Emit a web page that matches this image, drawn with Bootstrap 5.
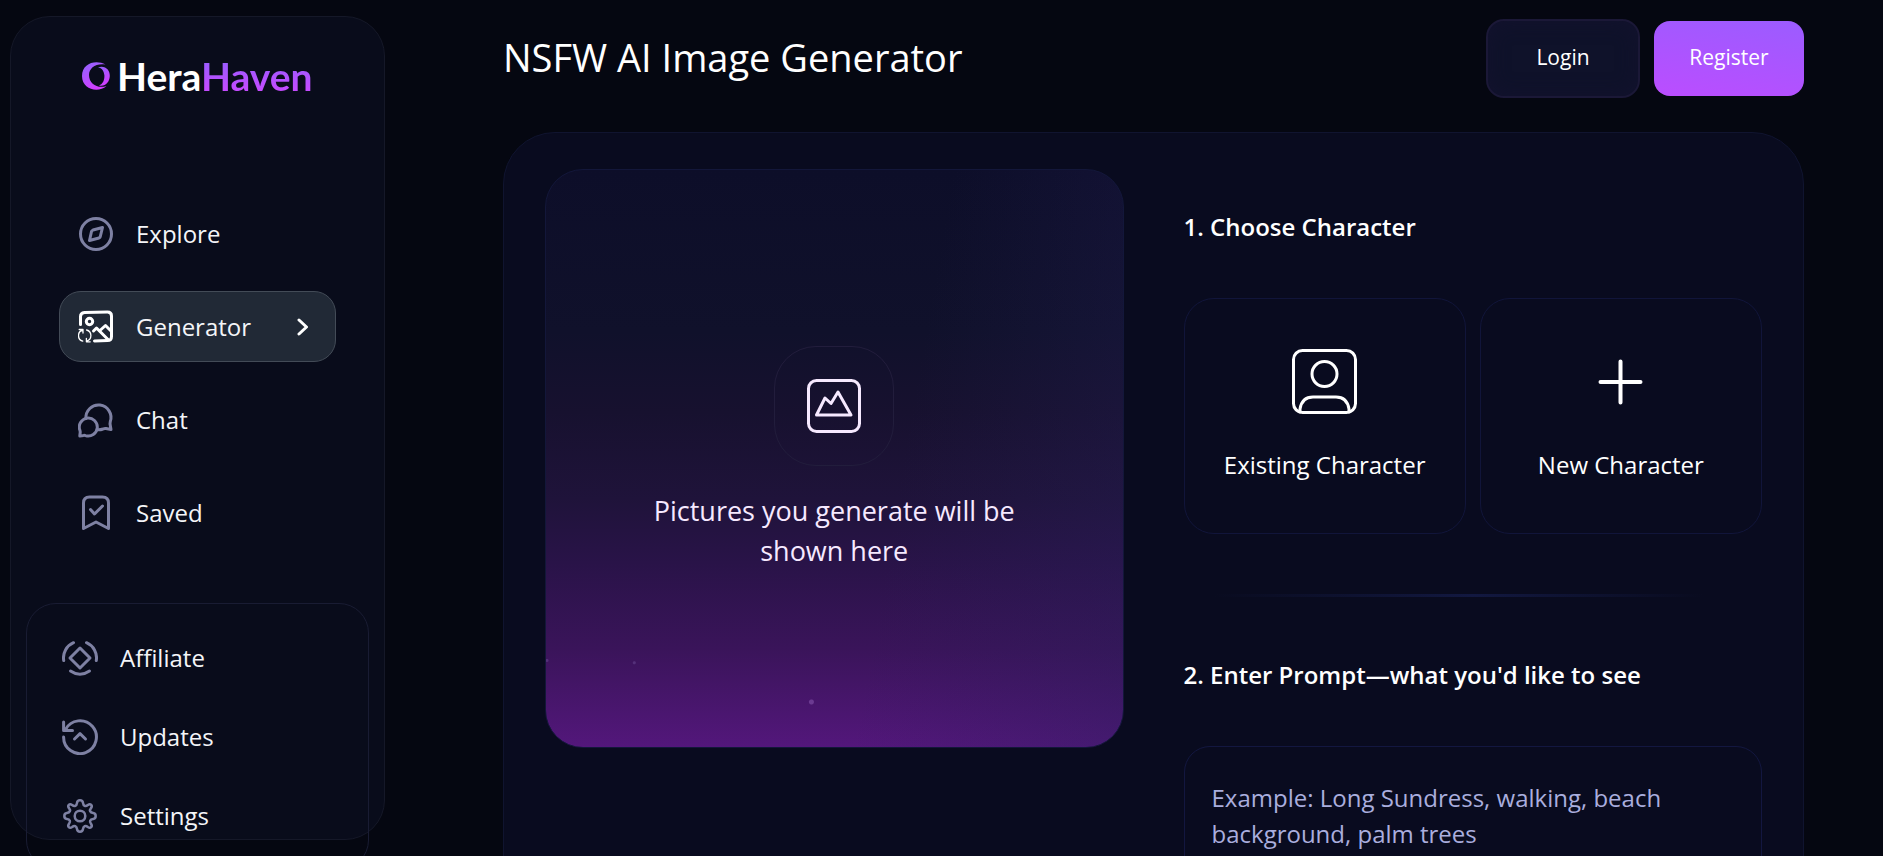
<!DOCTYPE html>
<html lang="en">
<head>
<meta charset="utf-8">
<meta name="viewport" content="width=device-width, initial-scale=1">
<title>HeraHaven – Image Generator</title>
<link href="https://cdn.jsdelivr.net/npm/bootstrap@5.3.0/dist/css/bootstrap.min.css" rel="stylesheet">
<style>
  html { scrollbar-width: none; }
  body { background: #050711; color: #fff; font-family: "Open Sans", sans-serif; font-size: 24px; line-height: 36px; }
  svg { display: block; flex: none; }
  .line-icon { fill: none; stroke: currentColor; stroke-width: 3; stroke-linecap: round; stroke-linejoin: round; }
  .plus-icon { stroke-width: 4; }
  .gear-icon { stroke-width: 1.2; }

  .side-panel { top: 16px; width: 375px; height: calc(100vh - 32px); margin: 16px 0 16px 10px; padding: 0 15px; flex: none;
    background: #090c1b; border: 1px solid #151828; border-radius: 40px; }
  .brand { padding: 37px 0 0 56px; gap: 7px; font: 700 39px/44px Lato, sans-serif; color: #fff; text-decoration: none; }
  .brand-accent { background: linear-gradient(#9b5cff 20%, #c44bff 80%); -webkit-background-clip: text; background-clip: text; color: transparent; }
  .main-menu { margin-top: 100px; padding: 0 33px; gap: 22px; }
  .menu-link { height: 71px; padding: 0 26px 0 18px; gap: 22px; color: #f4f5f8; text-decoration: none; border: 1px solid transparent; border-radius: 22px; }
  .menu-link svg:first-child { color: #7e81a3; }
  .menu-link.active { background: #212936; border-color: #434b57; }
  .menu-link.active svg { color: #fff; }
  .sub-menu { margin-top: 55px; padding: 14px 0; border: 1px solid #191c33; border-radius: 30px; }
  .sub-menu .menu-link { height: 79px; padding-left: 34px; }

  .content-area { margin: 0 79px 32px 118px; }
  .page-head { padding-top: 19px; padding-bottom: 34px; }
  .page-title { font-size: 38px; line-height: 52px; font-weight: 400; padding-bottom: 3px; }
  .head-actions { gap: 14px; }
  .btn-auth { width: 150px; height: 75px; padding: 0 0 2px; font-size: 21px; border: 0; border-radius: 16px; color: #fff; }
  .btn-login { width: 154px; height: 79px; background: #0f122a; border: 2px solid #1b1837; box-shadow: inset 0 0 20px #13122e; border-radius: 18px; }
  .btn-register, .btn-register:hover { color: #fff; background: linear-gradient(190deg, #9b5cff, #bb4dff); }
  .btn-login:hover { color: #fff; background: #171a36; border-color: #1b1837; }

  .workspace { padding: 36px 41px; background: #090b1f; border: 1px solid #10142f; border-radius: 52px; }
  .workspace-grid { display: grid; grid-template-columns: 1fr 1fr; gap: 60px; align-items: start; }
  .preview { aspect-ratio: 1; padding: 0 90px; border: 1px solid #13173a; border-radius: 38px; color: #f6e9ff; font-size: 27px; line-height: 40px;
    background:
      radial-gradient(circle at 46% 92.2%, #6b3a91 2px, transparent 3px),
      radial-gradient(circle at 15.3% 85.4%, #54307a 1px, transparent 2px),
      radial-gradient(circle at 1px 85%, #54307a 1px, transparent 2px),
      linear-gradient(100deg, transparent 60%, #26205a55 100%),
      linear-gradient(#0d0e29 0%, #10112b 28%, #17112f 42%, #1f133a 57%, #291348 68%, #3a145a 83%, #53177b 100%); }
  .preview-icon { width: 120px; height: 120px; margin-bottom: 25px; border: 1px solid #221d3c; border-radius: 42px; }

  .step-title { font-size: 24px; line-height: 36px; font-weight: 600; margin-bottom: 53px; }
  .step-first { padding-top: 40px; }
  .choice-grid { display: grid; grid-template-columns: 1fr 1fr; gap: 14px; }
  .btn-choice, .btn-choice:hover { height: 236px; padding: 0; gap: 33px; font-size: 24px; line-height: 36px; color: #fff; border: 1px solid #11153a; border-radius: 30px; }
  .step-divider { height: 3px; margin: 60px 0; border: 0; opacity: 1; background: linear-gradient(90deg, transparent 5%, #121840 50%, transparent 90%); }
  .prompt-box, .prompt-box:focus { height: 180px; padding: 33px 27px; font-size: 24px; line-height: 36px; color: #fff; resize: none;
    background: transparent; border: 1px solid #131740; border-radius: 26px; box-shadow: none; }
  .prompt-box::placeholder { color: #aaaede; opacity: 1; }
</style>
</head>
<body>
<div class="d-flex align-items-start">
  <aside class="side-panel sticky-top">
    <a class="brand d-flex align-items-center" href="#">
      <svg width="28" height="28" viewBox="0 0 28 28" aria-hidden="true">
        <defs><linearGradient id="ring" x1="0" y1="0" x2=".5" y2="1"><stop offset="0" stop-color="#8f66ff"/><stop offset="1" stop-color="#d23dff"/></linearGradient></defs>
        <g fill="url(#ring)">
          <path d="M23.500 2.600C14-2.600 0 1 0 14C0 27.500 16 31.500 24.500 24C16 27 7 22 7 13C7 6 14 1 23.500 2.600Z"/>
          <path d="M16 5.200C23.500 3 28 8 27.800 14C27.500 20 23.500 25 17 23.500C21 22 22.500 18 22.400 13.500C22 9 20 6 16 5.200Z"/>
        </g>
      </svg>
      <span>Hera<span class="brand-accent">Haven</span></span>
    </a>
    <nav class="main-menu d-flex flex-column" aria-label="Main">
      <a class="menu-link d-flex align-items-center" href="#">
        <svg class="line-icon" width="36" height="36" viewBox="0 0 36 36"><circle cx="18" cy="18" r="15.500"/><path d="M11.500 24.500L13.500 15.500Q14 14.500 15 14L24.500 11.500L22.300 20.500Q22 21.500 21 22Z"/></svg>
        Explore
      </a>
      <a class="menu-link active d-flex align-items-center" href="#" aria-current="page">
        <svg class="line-icon" width="36" height="34" viewBox="0 0 36 34"><path d="M2.500 14.500V6.500Q2.500 3 6.500 2.500L29.500 2Q33.500 2 33.500 6V26.500Q33.500 30.500 29.500 30.500L16.500 31"/><circle cx="11.500" cy="11.500" r="3.200"/><path d="M15.500 21L18.500 18L30 29.500M22.500 20L27.500 15.500L33 21"/><g stroke-width="1.300"><path d="M4.800 20A5.800 5.800 0 0 0 4.800 31.200M8.600 31.200A5.800 5.800 0 0 0 8.600 20M1.200 19.500H5V23M12.200 31.800H8.400V28.300"/></g></svg>
        Generator
        <svg class="line-icon ms-auto" width="12" height="18" viewBox="0 0 12 18"><path d="M2 2L9.500 9L2 16"/></svg>
      </a>
      <a class="menu-link d-flex align-items-center" href="#">
        <svg class="line-icon" width="36" height="36" viewBox="0 0 36 36"><path d="M8 16.500A12.500 12.500 0 1 1 32.300 19.500Q31.800 21.500 32.300 23.500L33 27.500L28 26.500Q26.500 26.300 25 27Q22.500 28 19.500 27.800"/><path d="M1.800 34L2.200 30.500Q2.300 29.500 1.900 28.300A9 9 0 1 1 7.500 33.600Q6.500 33.200 5.500 33.400Z"/></svg>
        Chat
      </a>
      <a class="menu-link d-flex align-items-center" href="#">
        <svg class="line-icon" width="36" height="36" viewBox="0 0 36 36"><path d="M5.500 33.500V8Q5.500 2 11.500 2H24.500Q30.500 2 30.500 8V33.500L18 27Z"/><path d="M12.500 14.500L16.500 19L24.500 11"/></svg>
        Saved
      </a>
    </nav>
    <nav class="sub-menu" aria-label="More">
      <a class="menu-link d-flex align-items-center" href="#">
        <svg class="line-icon" width="36" height="36" viewBox="0 0 36 36"><path d="M18 8L28 18L18 28L8 18Z"/><path d="M1.700 20.500A16.500 16.500 0 0 1 11.500 2.700M24.500 2.700A16.500 16.500 0 0 1 34.300 20.500M8.500 31Q18 37.500 27.500 31"/></svg>
        Affiliate
      </a>
      <a class="menu-link d-flex align-items-center" href="#">
        <svg class="line-icon" width="36" height="36" viewBox="0 0 36 36"><path d="M1.600 18A16.400 16.400 0 1 0 3.500 10.500"/><path d="M1.600 3V11.500H10.500M12.500 20L18 14.700L23.500 20"/></svg>
        Updates
      </a>
      <a class="menu-link d-flex align-items-center" href="#">
        <svg class="line-icon gear-icon" width="36" height="36" viewBox="-.5 -.5 17 17"><circle cx="8" cy="8" r="2.500"/><path d="M9.400 1.800C9.200.2 6.800.2 6.600 1.800C6.400 3.300 5.400 3.700 4.300 2.800C3 1.900 1.900 3 2.800 4.300C3.700 5.400 3.300 6.400 1.800 6.600C.2 6.800.2 9.200 1.800 9.400C3.300 9.600 3.700 10.600 2.800 11.700C1.900 13 3 14.100 4.300 13.200C5.400 12.300 6.400 12.700 6.600 14.200C6.800 15.800 9.200 15.800 9.400 14.200C9.600 12.700 10.600 12.300 11.700 13.200C13 14.100 14.100 13 13.200 11.700C12.300 10.600 12.700 9.600 14.200 9.400C15.800 9.200 15.800 6.800 14.200 6.600C12.700 6.400 12.300 5.400 13.200 4.300C14.100 3 13 1.900 11.700 2.800C10.600 3.700 9.600 3.300 9.400 1.800Z"/></svg>
        Settings
      </a>
    </nav>
  </aside>

  <main class="content-area flex-grow-1">
    <header class="page-head d-flex justify-content-between align-items-center">
      <h1 class="page-title m-0">NSFW AI Image Generator</h1>
      <div class="head-actions d-flex align-items-center">
        <button type="button" class="btn btn-auth btn-login">Login</button>
        <button type="button" class="btn btn-auth btn-register">Register</button>
      </div>
    </header>

    <section class="workspace">
      <div class="workspace-grid">
        <div class="preview d-flex flex-column align-items-center justify-content-center text-center">
          <div class="preview-icon d-flex align-items-center justify-content-center">
            <svg class="line-icon" width="56" height="56" viewBox="0 0 56 56"><rect x="2.500" y="2.500" width="51" height="51" rx="8"/><path d="M10.500 37L19 20L25 25.500L32 14L45 37Z"/></svg>
          </div>
          <p class="m-0">Pictures you generate will be shown here</p>
        </div>

        <form onsubmit="return false">
          <div class="step-first">
            <h2 class="step-title">1. Choose Character</h2>
            <div class="choice-grid">
              <button type="button" class="btn btn-choice d-flex flex-column align-items-center justify-content-center">
                <svg class="line-icon" width="65" height="65" viewBox="0 0 65 65"><rect x="1.500" y="1.500" width="62" height="62" rx="9"/><circle cx="32.500" cy="25" r="12.500"/><path d="M8 63V60Q10 48 21 48H44Q55 48 57 60V63"/></svg>
                Existing Character
              </button>
              <button type="button" class="btn btn-choice d-flex flex-column align-items-center justify-content-center">
                <svg class="line-icon plus-icon" width="65" height="65" viewBox="0 0 65 65"><path d="M32.500 12.500V53.500M12.500 33H52.500"/></svg>
                New Character
              </button>
            </div>
          </div>
          <hr class="step-divider">
          <h2 class="step-title"><label for="prompt">2. Enter Prompt—what you'd like to see</label></h2>
          <textarea id="prompt" class="form-control prompt-box" placeholder="Example: Long Sundress, walking, beach background, palm trees"></textarea>
        </form>
      </div>
    </section>
  </main>
</div>
<script src="https://cdn.jsdelivr.net/npm/bootstrap@5.3.0/dist/js/bootstrap.bundle.min.js"></script>
</body>
</html>
